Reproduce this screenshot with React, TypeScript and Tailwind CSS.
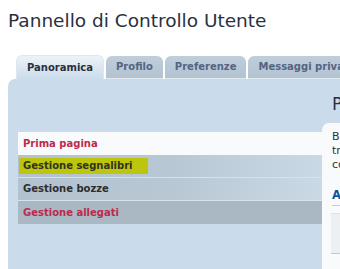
const tabs = [
  { label: "Panoramica", active: true },
  { label: "Profilo" },
  { label: "Preferenze" },
  { label: "Messaggi privati" },
]

function NavItem({ label, kind }: { label: string; kind: "current" | "marked" | "plain" | "hover" }) {
  if (kind === "current") {
    return (
      <div className="h-[23px] flex items-center pl-[5px] bg-[#F9FAFB] text-[#BC2A4D]">
        {label}
      </div>
    )
  }
  if (kind === "hover") {
    return (
      <div className="h-[23px] flex items-center pl-[5px] bg-[#A9B8C3] text-[#BC2A4D]">
        {label}
      </div>
    )
  }
  return (
    <div className="h-[23px] flex items-center border-b border-[#D6E1EA] bg-gradient-to-r from-[#B3C2CF] via-[#B8C7D4] to-[#CAD9E6] text-[#2D2D2D]">
      {kind === "marked" ? (
        <span className="ml-[1px] w-[129px] h-[16px] flex items-center pl-[4px] bg-[#BDC50C] text-[#2F3322]">
          {label}
        </span>
      ) : (
        <span className="pl-[5px]">{label}</span>
      )}
    </div>
  )
}

export default function App() {
  return (
    <div className="w-[340px] h-[269px] overflow-hidden bg-white font-['DejaVu_Sans',sans-serif]">
      <h2 className="pt-[12px] pl-[8px] text-[18.5px] leading-none text-[#28313F] whitespace-nowrap">
        Pannello di Controllo Utente
      </h2>

      <div className="mt-[24px] flex items-end gap-[2px] pl-[16px] whitespace-nowrap text-[10px] font-bold">
        {tabs.map((t) =>
          t.active ? (
            <div
              key={t.label}
              className="shrink-0 h-[24px] px-[10px] flex items-center rounded-t-[6px] border-t border-x border-[#DDE7F0] bg-gradient-to-b from-[#EDF2F7] to-[#CADCEB] text-[#28313F]"
            >
              {t.label}
            </div>
          ) : (
            <div
              key={t.label}
              className="shrink-0 h-[23px] px-[10px] flex items-center rounded-t-[6px] border-b border-[#E3EBF2] bg-gradient-to-b from-[#C0CEDB] to-[#B3C3D1] text-[#536482]"
            >
              {t.label}
            </div>
          )
        )}
      </div>

      <div className="ml-[8px] h-[191px] w-[400px] rounded-tl-[7px] bg-[#CADCEB] flex">
        <div className="shrink-0 ml-[10px] mt-[53px] w-[304px] text-[10px] font-bold whitespace-nowrap">
          <NavItem label="Prima pagina" kind="current" />
          <NavItem label="Gestione segnalibri" kind="marked" />
          <NavItem label="Gestione bozze" kind="plain" />
          <NavItem label="Gestione allegati" kind="hover" />
        </div>

        <div className="flex-1 min-w-0 flex flex-col">
          <h2 className="mt-[17px] pl-[10px] text-[17px] leading-none text-[#28313F] whitespace-nowrap">
            Panoramica
          </h2>
          <div className="mt-[10px] flex-1 rounded-tl-[7px] bg-[#F8FAFB] pl-[10px] pt-[7px] whitespace-nowrap">
            <p className="text-[11px] leading-[14px] text-[#333333]">
              Benvenuto nel Pannello di Controllo Utente.
              <br />
              tramite le schede puoi modificare il profilo,
              <br />
              controllare le iscrizioni ai forum.
            </p>
            <h3 className="mt-[16px] pb-[3px] border-b border-[#CCCCCC] text-[11.5px] font-bold leading-[14px] text-[#115098]">
              Argomenti importanti
            </h3>
            <div className="mt-[7px] -ml-[1px] h-[41px] border-t border-b border-t-[#DCE4EA] border-b-[#BFC9D1] bg-[#ECF0F3]" />
          </div>
        </div>
      </div>
    </div>
  )
}
